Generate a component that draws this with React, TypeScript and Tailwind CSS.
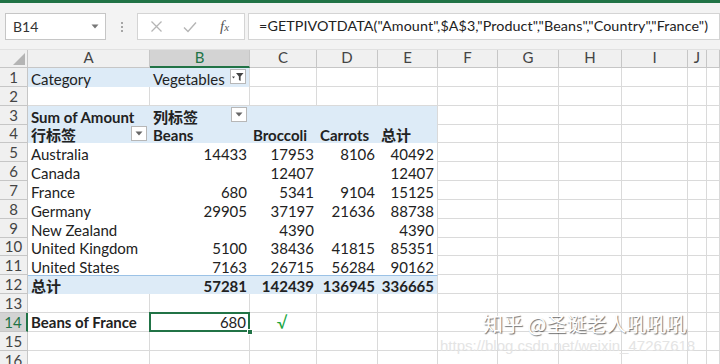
import React from "react";

const W = [
	"w-[122px]",
	"w-[100px]",
	"w-[67px]",
	"w-[61px]",
	"w-[60px]",
	"w-[60px]",
	"w-[61px]",
	"w-[63px]",
	"w-[66px]",
	"w-[19px]",
	"w-[13px]",
];
const LETTERS = ["A", "B", "C", "D", "E", "F", "G", "H", "I", "J", ""];

const DATA: [string, string, string, string, string][] = [
	["Australia", "14433", "17953", "8106", "40492"],
	["Canada", "", "12407", "", "12407"],
	["France", "680", "5341", "9104", "15125"],
	["Germany", "29905", "37197", "21636", "88738"],
	["New Zealand", "", "4390", "", "4390"],
	["United Kingdom", "5100", "38436", "41815", "85351"],
	["United States", "7163", "26715", "56284", "90162"],
];

const grid = "border-r border-b border-[#dadada]";

const Gridcells = ({ from }: { from: number }) => (
	<>
		{W.slice(from).map((w, i) => (
			<div key={i} className={`${w} h-full shrink-0 ${grid}`} />
		))}
	</>
);

const Row = ({
	n,
	children,
	active,
}: {
	n: number;
	children: React.ReactNode;
	active?: boolean;
}) => (
	<div className="flex h-[18.85px] shrink-0">
		<div
			className={
				active
					? "w-[28px] shrink-0 flex items-end justify-center pb-[1px] bg-[#d3d3d3] text-[#217346] border-r-2 border-r-[#217346] border-b border-b-[#c6c6c6]"
					: "w-[28px] shrink-0 flex items-end justify-center pb-[1px] bg-[#f0f0f0] text-[#444] border-r border-b border-[#c6c6c6]"
			}
		>
			{n}
		</div>
		{children}
	</div>
);

const DropBtn = ({ filter }: { filter?: boolean }) => (
	<div className="absolute right-[3px] top-[1px] w-[16px] h-[15px] bg-white border border-[#b7b7b7] flex items-center justify-center">
		{filter ? (
			<svg width="12" height="10" viewBox="0 0 12 10">
				<path d="M0 4.5h3l-1.5 2z" fill="#444" />
				<path d="M4 1h7.5L8.6 4.6V9L6.9 8V4.6z" fill="#444" />
			</svg>
		) : (
			<svg width="8" height="5" viewBox="0 0 8 5">
				<path d="M0.5 0.5h7L4 4.5z" fill="#666" />
			</svg>
		)}
	</div>
);

export default function App() {
	return (
		<div className="relative w-[720px] h-[364px] overflow-hidden bg-white text-[15px] text-[#222] font-['Lato','Noto_Sans_CJK_SC',sans-serif] leading-none">
			<div className="h-[3px] bg-[#217346]" />

			{/* formula bar */}
			<div className="h-[47px] bg-[#f3f3f3] flex items-start pt-[10px] pl-[5px] border-b border-[#e1e1e1]">
				<div className="w-[101px] h-[27px] bg-white border border-[#c6c6c6] flex items-center justify-between pl-[7px] pr-[6px] text-[14px] text-[#333]">
					<span>B14</span>
					<svg width="8" height="5" viewBox="0 0 8 5">
						<path d="M0.5 0.5h7L4 4.5z" fill="#777" />
					</svg>
				</div>
				<div className="w-[31px] h-[27px] flex flex-col items-center justify-center gap-[2px]">
					<span className="w-[2px] h-[2px] bg-[#a6a6a6]" />
					<span className="w-[2px] h-[2px] bg-[#a6a6a6]" />
					<span className="w-[2px] h-[2px] bg-[#a6a6a6]" />
				</div>
				<div className="w-[108px] h-[27px] bg-white border border-[#d4d4d4] flex items-center">
					<svg className="ml-[12px]" width="13" height="13" viewBox="0 0 13 13">
						<path d="M1.5 1.5l10 10M11.5 1.5l-10 10" stroke="#b5b5b5" strokeWidth="1.3" />
					</svg>
					<svg className="ml-[20px]" width="14" height="12" viewBox="0 0 14 12">
						<path d="M1 6.5l4 4L13 1.5" stroke="#b5b5b5" strokeWidth="1.4" fill="none" />
					</svg>
					<span className="ml-[23px] italic text-[15px] text-[#555] font-['Liberation_Serif',serif]">
						f<span className="text-[11px]">x</span>
					</span>
				</div>
				<div className="ml-[3px] flex-1 h-[27px] bg-white border border-[#d4d4d4] flex items-center pl-[10px] text-[14.3px] tracking-[0.1px] text-[#222] whitespace-nowrap">
					=GETPIVOTDATA("Amount",$A$3,"Product","Beans","Country","France")
				</div>
			</div>

			{/* column headers */}
			<div className="flex h-[18px] bg-[#f0f0f0] text-[#444]">
				<div className="w-[28px] shrink-0 relative border-r border-b border-[#c6c6c6]">
					<svg className="absolute right-[2px] bottom-[2px]" width="12" height="12" viewBox="0 0 12 12">
						<path d="M12 0V12H0z" fill="#b4b4b4" />
					</svg>
				</div>
				{W.map((w, i) =>
					i === 1 ? (
						<div
							key={i}
							className={`${w} shrink-0 flex items-end justify-center pb-[1px] bg-[#d3d3d3] text-[#217346] border-r border-[#c6c6c6] border-b-2 border-b-[#217346]`}
						>
							{LETTERS[i]}
						</div>
					) : (
						<div
							key={i}
							className={`${w} shrink-0 flex items-end justify-center pb-[2px] border-r border-b border-[#c6c6c6]`}
						>
							{LETTERS[i]}
						</div>
					),
				)}
			</div>

			{/* rows */}
			<Row n={1}>
				<div className="w-[122px] shrink-0 bg-[#ddebf7] flex items-end pl-[3px]">Category</div>
				<div className="w-[100px] shrink-0 bg-[#ddebf7] relative flex items-end pl-[3px] border-r border-[#dadada]">
					Vegetables
					<DropBtn filter />
				</div>
				<Gridcells from={2} />
			</Row>
			<Row n={2}>
				<Gridcells from={0} />
			</Row>
			<Row n={3}>
				<div className="w-[122px] shrink-0 bg-[#ddebf7] flex items-end pl-[3px] font-bold">Sum of Amount</div>
				<div className="w-[100px] shrink-0 bg-[#ddebf7] relative flex items-end pl-[3px] font-bold">
					列标签
					<DropBtn />
				</div>
				<div className="w-[67px] shrink-0 bg-[#ddebf7]" />
				<div className="w-[61px] shrink-0 bg-[#ddebf7]" />
				<div className="w-[60px] shrink-0 bg-[#ddebf7] border-r border-[#dadada]" />
				<Gridcells from={5} />
			</Row>
			<Row n={4}>
				<div className="w-[122px] shrink-0 bg-[#ddebf7] relative flex items-end pl-[3px] font-bold">
					行标签
					<DropBtn />
				</div>
				<div className="w-[100px] shrink-0 bg-[#ddebf7] flex items-end pl-[3px] font-bold">Beans</div>
				<div className="w-[67px] shrink-0 bg-[#ddebf7] flex items-end pl-[3px] font-bold">Broccoli</div>
				<div className="w-[61px] shrink-0 bg-[#ddebf7] flex items-end pl-[3px] font-bold">Carrots</div>
				<div className="w-[60px] shrink-0 bg-[#ddebf7] flex items-end pl-[3px] font-bold border-r border-[#dadada]">总计</div>
				<Gridcells from={5} />
			</Row>
			{DATA.map((r, i) => (
				<Row key={r[0]} n={5 + i}>
					<div className="w-[122px] shrink-0 flex items-end pl-[3px] whitespace-nowrap">{r[0]}</div>
					<div className="w-[100px] shrink-0 flex items-end justify-end pr-[3px]">{r[1]}</div>
					<div className="w-[67px] shrink-0 flex items-end justify-end pr-[3px]">{r[2]}</div>
					<div className="w-[61px] shrink-0 flex items-end justify-end pr-[3px]">{r[3]}</div>
					<div className="w-[60px] shrink-0 flex items-end justify-end pr-[3px] border-r border-[#dadada]">{r[4]}</div>
					<Gridcells from={5} />
				</Row>
			))}
			<Row n={12}>
				<div className="w-[122px] shrink-0 bg-[#ddebf7] border-t border-[#9bc2e6] flex items-end pl-[3px] font-bold">总计</div>
				<div className="w-[100px] shrink-0 bg-[#ddebf7] border-t border-[#9bc2e6] flex items-end justify-end pr-[3px] font-bold">57281</div>
				<div className="w-[67px] shrink-0 bg-[#ddebf7] border-t border-[#9bc2e6] flex items-end justify-end pr-[3px] font-bold">142439</div>
				<div className="w-[61px] shrink-0 bg-[#ddebf7] border-t border-[#9bc2e6] flex items-end justify-end pr-[3px] font-bold">136945</div>
				<div className="w-[60px] shrink-0 bg-[#ddebf7] border-t border-t-[#9bc2e6] flex items-end justify-end pr-[3px] font-bold border-r border-r-[#dadada]">336665</div>
				<Gridcells from={5} />
			</Row>
			<Row n={13}>
				<Gridcells from={0} />
			</Row>
			<Row n={14} active>
				<div className={`w-[122px] shrink-0 flex items-end pb-[1px] pl-[3px] font-bold ${grid}`}>Beans of France</div>
				<div className={`w-[100px] shrink-0 relative flex items-end pb-[1px] justify-end pr-[3px] ${grid}`}>
					680
					<div className="absolute -left-px -top-px -right-px -bottom-px border-2 border-[#217346]" />
					<div className="absolute -right-[4px] -bottom-[4px] w-[6px] h-[6px] bg-[#217346] border border-white" />
				</div>
				<div className={`w-[67px] shrink-0 flex items-end justify-center pr-[2px] text-[#1aa640] text-[17px] ${grid}`}>√</div>
				<Gridcells from={3} />
			</Row>
			<Row n={15}>
				<Gridcells from={0} />
			</Row>
			<Row n={16}>
				<Gridcells from={0} />
			</Row>

			{/* watermark */}
			<div className="absolute left-[483px] top-[314px] text-[20px] text-white font-['Noto_Sans_CJK_SC',sans-serif] [text-shadow:1px_1px_1px_rgba(0,0,0,0.55)] whitespace-nowrap">
				知乎 @圣诞老人吼吼吼
			</div>
			<div className="absolute left-[440px] top-[338px] text-[15px] text-[#e4e4e4] font-['Liberation_Sans',sans-serif] whitespace-nowrap">
				https://blog.csdn.net/weixin_47267618
			</div>
		</div>
	);
}
